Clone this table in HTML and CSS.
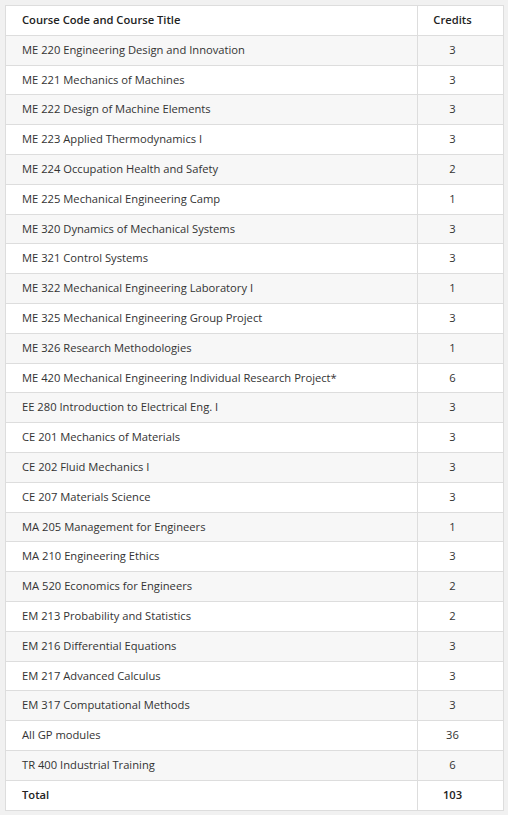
FILE: index.html
```html
<!DOCTYPE html>
<html>
<head>
<meta charset="utf-8">
<link rel="stylesheet" href="styles.css">
</head>
<body>
<table class="courses">
<thead>
<tr><th class="title">Course Code and Course Title</th><th class="cr">Credits</th></tr>
</thead>
<tbody>
<tr><td>ME 220 Engineering Design and Innovation</td><td class="cr">3</td></tr>
<tr><td>ME 221 Mechanics of Machines</td><td class="cr">3</td></tr>
<tr><td>ME 222 Design of Machine Elements</td><td class="cr">3</td></tr>
<tr><td>ME 223 Applied Thermodynamics I</td><td class="cr">3</td></tr>
<tr><td>ME 224 Occupation Health and Safety</td><td class="cr">2</td></tr>
<tr><td>ME 225 Mechanical Engineering Camp</td><td class="cr">1</td></tr>
<tr><td>ME 320 Dynamics of Mechanical Systems</td><td class="cr">3</td></tr>
<tr><td>ME 321 Control Systems</td><td class="cr">3</td></tr>
<tr><td>ME 322 Mechanical Engineering Laboratory I</td><td class="cr">1</td></tr>
<tr><td>ME 325 Mechanical Engineering Group Project</td><td class="cr">3</td></tr>
<tr><td>ME 326 Research Methodologies</td><td class="cr">1</td></tr>
<tr><td>ME 420 Mechanical Engineering Individual Research Project*</td><td class="cr">6</td></tr>
<tr><td>EE 280 Introduction to Electrical Eng. I</td><td class="cr">3</td></tr>
<tr><td>CE 201 Mechanics of Materials</td><td class="cr">3</td></tr>
<tr><td>CE 202 Fluid Mechanics I</td><td class="cr">3</td></tr>
<tr><td>CE 207 Materials Science</td><td class="cr">3</td></tr>
<tr><td>MA 205 Management for Engineers</td><td class="cr">1</td></tr>
<tr><td>MA 210 Engineering Ethics</td><td class="cr">3</td></tr>
<tr><td>MA 520 Economics for Engineers</td><td class="cr">2</td></tr>
<tr><td>EM 213 Probability and Statistics</td><td class="cr">2</td></tr>
<tr><td>EM 216 Differential Equations</td><td class="cr">3</td></tr>
<tr><td>EM 217 Advanced Calculus</td><td class="cr">3</td></tr>
<tr><td>EM 317 Computational Methods</td><td class="cr">3</td></tr>
<tr><td>All GP modules</td><td class="cr">36</td></tr>
<tr><td>TR 400 Industrial Training</td><td class="cr">6</td></tr>
<tr class="total"><td>Total</td><td class="cr">103</td></tr>
</tbody>
</table>
</body>
</html>
```
FILE: styles.css
```css
html, body {
  margin: 0;
  padding: 0;
  background: #f1f1f1;
}
body {
  padding: 5px;
  font-family: "Open Sans", sans-serif;
  font-size: 11.2px;
  color: #333;
}
.courses {
  width: 499px;
  border-collapse: collapse;
  background: #fff;
  border: 1px solid #ddd;
}
.courses th,
.courses td {
  border: 1px solid #ddd;
  padding: 6px 16px;
  line-height: 16.8px;
  text-align: left;
}
.courses th {
  font-weight: 600;
  color: #222;
}
.courses .cr {
  width: 53px;
  padding: 6px 24px 6px 8px;
  text-align: center;
}
.courses tbody tr:nth-child(odd) td {
  background: #f7f7f7;
}
.courses tbody tr.total td {
  font-weight: 600;
  color: #222;
}
```
